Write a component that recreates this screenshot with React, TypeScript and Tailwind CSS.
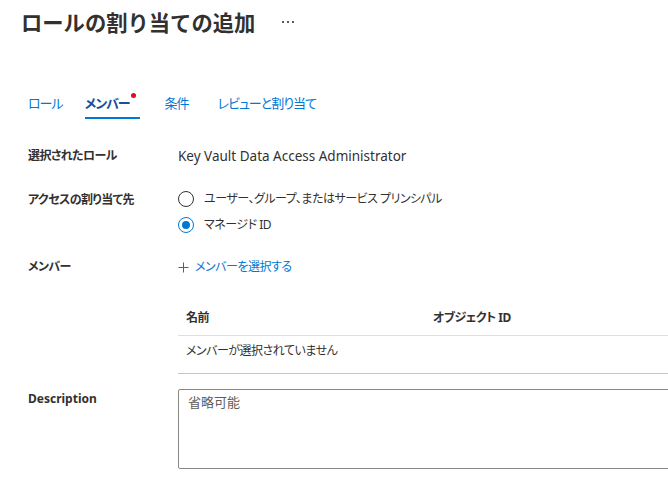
import React from "react";

const font = "[font-family:'Noto_Sans','Noto_Sans_CJK_JP',sans-serif] [font-feature-settings:'palt']";

function Radio({ checked, label }: { checked?: boolean; label: string }) {
  return (
    <div className="flex h-[26px] items-center">
      <span
        className={`flex h-[16px] w-[16px] shrink-0 items-center justify-center rounded-full border ${
          checked ? "border-[#0078d4]" : "border-[#323130]"
        } bg-white`}
      >
        {checked && <span className="h-[8px] w-[8px] rounded-full bg-[#0078d4]" />}
      </span>
      <span className="ml-[10px] text-[12px] leading-[20px] tracking-[-0.5px] text-[#323130]">{label}</span>
    </div>
  );
}

export default function App() {
  return (
    <div className={`w-[668px] h-[489px] overflow-hidden bg-white text-[#323130] ${font}`}>
      <div className="flex items-center pl-[21px] pt-[8px]">
        <h1 className="text-[21.3px] font-bold leading-[28px] text-[#323130] [font-feature-settings:normal] [font-family:'Noto_Sans_CJK_JP',sans-serif]">
          ロールの割り当ての追加
        </h1>
        <span className="ml-[27px] flex gap-[3px]">
          <span className="h-[2px] w-[2px] bg-[#605e5c]" />
          <span className="h-[2px] w-[2px] bg-[#605e5c]" />
          <span className="h-[2px] w-[2px] bg-[#605e5c]" />
        </span>
      </div>

      <div className="mt-[57px] flex pl-[28px] text-[13px] leading-[20px] tracking-[-1px]">
        <div className="border-b-2 border-transparent pb-[4px] text-[#0078d4]">ロール</div>
        <div className="ml-[22px] border-b-2 border-[#0078d4] pb-[4px] pr-[10px] font-semibold text-[#1a4f9c]">
          <span className="relative">
            メンバー
            <span className="absolute -right-[6px] -top-[1px] h-[5px] w-[5px] rounded-full bg-[#e00b1c]" />
          </span>
        </div>
        <div className="ml-[25px] border-b-2 border-transparent pb-[4px] text-[#0078d4]">条件</div>
        <div className="ml-[29px] border-b-2 border-transparent pb-[4px] text-[#0078d4]">レビューと割り当て</div>
      </div>

      <div className="pl-[28px]">
        <div className="mt-[27px] flex leading-[20px]">
          <div className="w-[150px] shrink-0 text-[12px] font-bold tracking-[-0.6px]">選択されたロール</div>
          <div className="text-[13.5px]">Key Vault Data Access Administrator</div>
        </div>

        <div className="mt-[19px] flex leading-[20px]">
          <div className="mt-[5px] w-[150px] shrink-0 text-[12px] font-bold tracking-[-0.6px]">アクセスの割り当て先</div>
          <div className="flex flex-col pt-[1px]">
            <Radio label="ユーザー、グループ、またはサービス プリンシパル" />
            <Radio checked label="マネージド ID" />
          </div>
        </div>

        <div className="mt-[19px] flex leading-[20px]">
          <div className="w-[150px] shrink-0 text-[12px] font-bold tracking-[-0.6px]">メンバー</div>
          <div className="flex items-center text-[12px] tracking-[-0.5px] text-[#0078d4]">
            <svg width="11" height="11" viewBox="0 0 11 11" className="mr-[6px]">
              <path d="M5.5 0.5V10.5M0.5 5.5H10.5" stroke="#0078d4" strokeWidth="1" />
            </svg>
            メンバーを選択する
          </div>
        </div>

        <div className="mt-[24px] ml-[150px] w-[600px] text-[12px]">
          <div className="flex h-[35px] items-center border-b border-[#e1dfdd] font-bold tracking-[-0.5px]">
            <div className="w-[255px] shrink-0 pl-[8px]">名前</div>
            <div>オブジェクト ID</div>
          </div>
          <div className="h-[38px] border-b border-[#c8c6c4] pl-[8px] pt-[5px] leading-[20px] tracking-[-0.5px]">
            メンバーが選択されていません
          </div>
        </div>

        <div className="mt-[15px] flex leading-[20px]">
          <div className="w-[150px] shrink-0 text-[12px] font-bold">Description</div>
          <div className="h-[80px] w-[560px] shrink-0 rounded-[2px] border border-[#8a8886] px-[9px] pt-[2px] text-[13px] text-[#605e5c]">
            省略可能
          </div>
        </div>
      </div>
    </div>
  );
}
